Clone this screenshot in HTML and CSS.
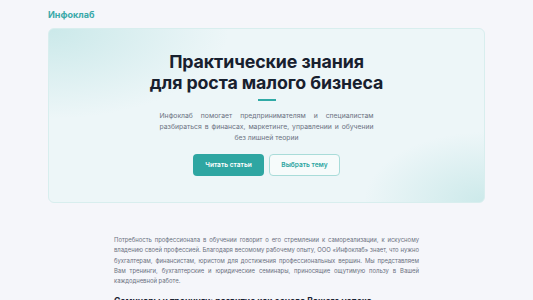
FILE: index.html
```html
<!DOCTYPE html>
<html lang="ru">
<head>
<meta charset="utf-8">
<title>Инфоклаб</title>
<link rel="stylesheet" href="styles.css">
</head>
<body>
<div class="wrap">
  <header class="top">
    <a class="logo" href="#">Инфоклаб</a>
  </header>

  <section class="hero">
    <h1>Практические знания<br>для роста малого бизнеса</h1>
    <div class="line"></div>
    <p class="lead">Инфоклаб помогает предпринимателям и специалистам разбираться в финансах, маркетинге, управлении и обучении без лишней теории</p>
    <div class="actions">
      <a class="btn btn-main" href="#">Читать статьи</a>
      <a class="btn btn-ghost" href="#">Выбрать тему</a>
    </div>
  </section>

  <section class="about">
    <p>Потребность профессионала в обучении говорит о его стремлении к самореализации, к искусному владению своей профессией. Благодаря весомому рабочему опыту, ООО «Инфоклаб» знает, что нужно бухгалтерам, финансистам, юристом для достижения профессиональных вершин. Мы представляем Вам тренинги, бухгалтерские и юридические семинары, приносящие ощутимую пользу в Вашей каждодневной работе.</p>
    <h2>Семинары и тренинги: развитие как основа Вашего успеха</h2>
  </section>
</div>
</body>
</html>
```

FILE: styles.css
```css
* { box-sizing: border-box; }
body { margin: 0; background: #f5f6fa; font-family: Inter, "Noto Sans", sans-serif; color: #1b2333; }
.wrap { width: 437px; margin: 0 auto; }

.top { height: 28px; display: flex; align-items: center; }
.logo { font-size: 9px; font-weight: 700; color: #3aa9a9; text-decoration: none; }

.hero {
  border: 1px solid #d8eeee;
  border-radius: 6px;
  padding: 22px 20px 26px;
  display: flex; flex-direction: column; align-items: center;
  background:
    radial-gradient(ellipse 180px 90px at 0 0, rgba(180, 224, 224, 0.6), transparent),
    radial-gradient(ellipse 120px 70px at 100% 100%, rgba(190, 228, 228, 0.7), transparent),
    #edf6f8;
}
.hero h1 { margin: 0; font-size: 17.8px; line-height: 21px; font-weight: 700; text-align: center; color: #18202e; letter-spacing: -0.1px; }
.line { width: 18px; height: 2px; background: #30aaa6; margin: 6px 0 9px; }
.lead {
  width: 214px; margin: 0; font-size: 6.8px; line-height: 11px; color: #6c7282;
  text-align: justify; text-align-last: center;
}
.actions { display: flex; gap: 5px; margin-top: 11px; }
.btn {
  width: 71px; height: 22px; border-radius: 4px; display: flex; align-items: center; justify-content: center;
  font-size: 6.6px; font-weight: 600; text-decoration: none;
}
.btn-main { background: #2ea6a2; color: #fff; }
.btn-ghost { border: 1px solid #a9dcd9; color: #2ea6a2; background: #f6fbfb; }

.about { width: 305px; margin: 32px auto 0; }
.about p { margin: 0; font-size: 5.9px; line-height: 10.3px; color: #6a7080; text-align: justify; }
.about h2 { margin: 10px 0 0; font-size: 8.6px; font-weight: 700; color: #1b2333; }
```
